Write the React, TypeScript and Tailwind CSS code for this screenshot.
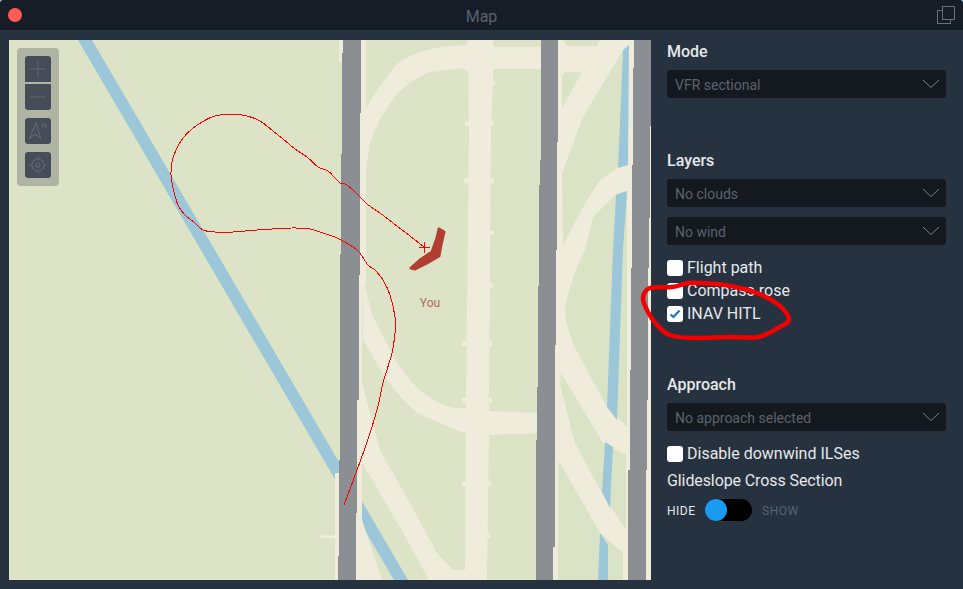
import React from "react";

type Pt = [number, number];

const smooth = (pts: Pt[]) => {
  let d = `M${pts[0][0]} ${pts[0][1]}`;
  for (let i = 0; i < pts.length - 1; i++) {
    const p0 = pts[Math.max(i - 1, 0)];
    const p1 = pts[i];
    const p2 = pts[i + 1];
    const p3 = pts[Math.min(i + 2, pts.length - 1)];
    const c1x = p1[0] + (p2[0] - p0[0]) / 6;
    const c1y = p1[1] + (p2[1] - p0[1]) / 6;
    const c2x = p2[0] - (p3[0] - p1[0]) / 6;
    const c2y = p2[1] - (p3[1] - p1[1]) / 6;
    d += ` C${c1x} ${c1y} ${c2x} ${c2y} ${p2[0]} ${p2[1]}`;
  }
  return d;
};

const trail: Pt[] = [
  [424, 247], [410, 236], [393, 223], [380, 213], [367, 204], [359, 196], [347, 185], [340, 183], [335, 178], [328, 171],
  [318, 167], [307, 157], [295, 149], [283, 139], [273, 131], [260, 121], [247, 116], [232, 114], [215, 116], [202, 122],
  [192, 129], [183, 138], [176, 150], [172, 162], [171, 175], [173, 188], [178, 205], [185, 215], [195, 223], [203, 230],
  [215, 232], [233, 232], [257, 230], [292, 228], [310, 229], [323, 233], [337, 238], [357, 250], [368, 265], [375, 270],
  [383, 280], [390, 295], [395, 317], [395, 333], [392, 353], [383, 383], [377, 410], [365, 448], [344, 505],
];

const scribble: Pt[] = [
  [702, 283], [688, 283], [672, 287], [650, 288], [643, 298], [648, 312], [657, 325], [670, 335], [692, 338], [728, 337],
  [758, 337], [778, 328], [789, 320], [782, 308], [768, 298], [748, 290], [725, 285], [702, 283],
];

const Select = ({ label }: { label: string }) => (
  <div className="flex h-[28px] w-[279px] items-center justify-between rounded-[3px] bg-[#14181f] pl-[8px] pr-[6px] text-[14px] text-[#5d636c]">
    <span className="pt-[2px]">{label}</span>
    <svg width="18" height="10" viewBox="0 0 18 10" fill="none" stroke="#7b818a" strokeWidth="1">
      <path d="M1 1 L9 8.5 L17 1" />
    </svg>
  </div>
);

const Check = ({ label, checked }: { label: string; checked?: boolean }) => (
  <div className="flex h-[23px] items-center gap-[4px] text-[16px] text-[#e6e8ea]">
    <span className="flex h-[16px] w-[16px] items-center justify-center rounded-[3px] bg-white">
      {checked && (
        <svg width="12" height="10" viewBox="0 0 12 10" fill="none" stroke="#1e78b8" strokeWidth="2.2">
          <path d="M1.5 5.5 L4.5 8 L10.5 1.5" />
        </svg>
      )}
    </span>
    <span>{label}</span>
  </div>
);

const Tool = ({ children, className = "" }: { children: React.ReactNode; className?: string }) => (
  <div className={`h-[26px] w-[26px] bg-[#464c58] ${className}`}>{children}</div>
);

const MapDrawing = () => (
  <svg viewBox="9 40 642 540" width="642" height="540" className="block">
    <rect x="9" y="40" width="642" height="540" fill="#dce3c6" />
    <polygon points="78,40 92,40 408,580 394,580" fill="#9bc7d8" />
    <g fill="#efecdc">
      <rect x="339" y="40" width="5" height="22" />
      <rect x="335" y="473" width="5" height="107" />
      <rect x="319" y="535.5" width="16" height="2.5" />
      <rect x="359" y="40" width="7" height="243" />
      <rect x="355" y="270" width="7" height="310" />
      <path d="M360 113 L366 108 Q380 84 397 64 Q420 46 467 45 L468 40 L493 40 L493 46 L497 47 L541 47 L541 69 L493 69 L489 73 L470 73 L463 68 L430 72 Q410 80 397 94 Q378 118 370 143 L364 185 L360 185 Z" />
      <polygon points="468,40 493,40 493,80 491,130 489,400 489,433 487,580 465,580 466,400 469,130" />
      <polygon points="465,121 494,121 494,126 465,126" />
      <polygon points="464,178 494,178 494,183 464,183" />
      <polygon points="488,81 495,81 495,85 488,85" />
      <polygon points="488,231 494,231 494,235 488,235" />
      <polygon points="486,283 493,283 493,288 486,288" />
      <polygon points="462,341 492,341 492,346 462,346" />
      <polygon points="462,398 492,398 492,403 462,403" />
      <polygon points="462,481 491,481 491,486 462,486" />
      <polygon points="485,533 490,533 490,538 485,538" />
      <path d="M362 250 L363 277 Q368 300 373 317 L397 363 Q410 382 423 393 Q440 405 453 408 L467 408 L490 411 L541 413 L541 433 L490 435 L463 433 L417 413 Q400 398 387 380 L363 340 Z" />
      <path d="M362 383 L380 450 L410 503 L437 553 L453 570 L470 570 L470 582 L430 582 L400 527 L362 463 Z" />
      <polygon points="355,513 362,520 382,580 355,580" />
      <rect x="553" y="40" width="96" height="540" />
      <rect x="645" y="125" width="6" height="455" />
    </g>
    <g fill="#dbe3c6">
      <polygon points="563,40 600,40 597,46 567,46" />
      <polygon points="562,76 565,72 582,72 562,108" />
      <polygon points="623,50 583,117 562,173 563,245 587,200 600,180 617,168 623,165" />
      <path d="M627 191 L617 193 L593 217 L585 250 Q572 275 565 307 Q565 330 580 357 L607 407 L627 427 Z" />
      <polygon points="561,373 603,443 626,455 626,530 600,490 575,443 560,385" />
      <polygon points="560,463 600,533 623,553 623,580 558,580 558,463" />
    </g>
    <g fill="#9bc7d8">
      <polygon points="623,50 629,45 628,165 618,168" />
      <polygon points="616,195 627,191 623,250 617,420 607,407 613,250" />
      <polygon points="605,442 613,447 610,508 602,492" />
      <polygon points="600,533 608,545 608,580 598,580" />
    </g>
    <g fill="#8b8e93" shapeRendering="crispEdges">
      <polygon points="343,40 361,40 361,113 360,113 360,275 359,275 359,400 357,400 357,513 356,513 356,580 338,580 338,556 339,556 339,460 340,460 340,254 341,254 341,154 342,154 342,53 343,53" />
      <polygon points="541,40 558,40 558,142 557,142 557,250 556,250 556,345 555,345 555,547 553,547 553,580 536,580 536,440 537,440 537,387 538,387 538,286 539,286 539,185 540,185 540,160 541,160" />
      <polygon points="634,40 651,40 651,126 650,126 650,218 649,218 649,268 648,268 648,400 647,400 647,470 646,470 646,580 628,580 628,470 630,470 630,370 631,370 631,268 632,268 632,165 633,165 633,68 634,68" />
    </g>
    <polygon points="439,229 444,232 441,245 439,256 427,263 415,269 411,268 420,260 432,252 437,238" fill="#b03f31" stroke="#b03f31" strokeWidth="3" strokeLinejoin="round" />
    <path d={smooth(trail)} fill="none" stroke="#ff0000" strokeWidth="1" shapeRendering="crispEdges" />
    <path d="M419 247.5 H430 M424.5 242 V253" stroke="#ff0000" strokeWidth="1" shapeRendering="crispEdges" />
    <text x="430" y="307" textAnchor="middle" fontSize="12" fill="#b5695d" fontFamily="Roboto, sans-serif">You</text>
  </svg>
);

export default function App() {
  return (
    <div className="h-[589px] w-[963px] bg-[#a8c6dc]">
      <div className="relative flex h-[589px] w-[963px] flex-col overflow-hidden rounded-t-[4px] bg-[#263240] font-['Roboto',sans-serif]">
        <div className="relative flex h-[30px] items-center justify-center bg-[#161d27] pt-[4px] text-[16px] text-[#59626e]">
          <span className="absolute left-[8px] top-[8px] h-[14px] w-[14px] rounded-full bg-[#ff5b57]" />
          <span>Map</span>
          <svg className="absolute left-[936px] top-[5px]" width="20" height="20" viewBox="0 0 20 20" fill="none" stroke="#6a717b" strokeWidth="1">
            <rect x="1.5" y="5.5" width="13" height="13" />
            <rect x="6.5" y="1.5" width="12" height="13" fill="#161d27" />
          </svg>
        </div>

        <div className="flex flex-1 pl-[9px] pt-[10px]">
          <div className="relative h-[540px] w-[642px]">
            <MapDrawing />
            <div className="absolute left-[8px] top-[8px] flex h-[138px] w-[42px] flex-col rounded-[4px] bg-[#b0b5a3] p-[8px]">
              <Tool className="rounded-t-[3px]">
                <svg width="26" height="26" viewBox="0 0 26 26" stroke="#5f6571" strokeWidth="1.2"><path d="M5 13 H21 M13 5 V21" /></svg>
              </Tool>
              <Tool className="mt-[2px] rounded-b-[3px]">
                <svg width="26" height="26" viewBox="0 0 26 26" stroke="#5f6571" strokeWidth="1.2"><path d="M5 13 H21" /></svg>
              </Tool>
              <Tool className="mt-[8px] rounded-[3px]">
                <svg width="26" height="26" viewBox="0 0 26 26" fill="none" stroke="#5f6571" strokeWidth="1.2">
                  <path d="M11 4.7 L4.3 20.3 L10.5 16.3 L15.7 20.3 Z" />
                  <text x="16.5" y="10" fontSize="8" fill="#5f6571" stroke="none" fontFamily="Roboto, sans-serif">N</text>
                </svg>
              </Tool>
              <Tool className="mt-[8px] rounded-[3px]">
                <svg width="26" height="26" viewBox="0 0 26 26" fill="none" stroke="#5f6571" strokeWidth="1.2">
                  <circle cx="13" cy="13" r="6" />
                  <circle cx="13" cy="13" r="2" />
                  <path d="M13 4 V7 M13 19 V22 M4 13 H7 M19 13 H22" />
                </svg>
              </Tool>
            </div>
          </div>

          <div className="flex flex-col pl-[16px] text-[#e6e8ea]">
            <div className="flex h-[24px] items-center text-[16px] font-medium">Mode</div>
            <div className="mt-[6px]"><Select label="VFR sectional" /></div>
            <div className="mt-[53px] flex h-[20px] items-center text-[16px] font-medium">Layers</div>
            <div className="mt-[8px]"><Select label="No clouds" /></div>
            <div className="mt-[10px]"><Select label="No wind" /></div>
            <div className="mt-[11px]">
              <Check label="Flight path" />
              <Check label="Compass rose" />
              <Check label="INAV HITL" checked />
            </div>
            <div className="mt-[50px] flex h-[20px] items-center text-[16px] font-medium">Approach</div>
            <div className="mt-[8px]"><Select label="No approach selected" /></div>
            <div className="mt-[11px]"><Check label="Disable downwind ILSes" /></div>
            <div className="mt-[6px] flex h-[20px] items-center text-[16px] tracking-[-0.1px]">Glideslope Cross Section</div>
            <div className="mt-[8px] flex h-[22px] items-center text-[12px] tracking-[0.5px]">
              <span className="w-[38px] pt-[2px]">HIDE</span>
              <span className="relative h-[22px] w-[47px] rounded-full bg-black">
                <span className="absolute left-0 top-0 h-[22px] w-[22px] rounded-full bg-[#1a9bf0]" />
              </span>
              <span className="ml-[10px] pt-[2px] text-[#59626e]">SHOW</span>
            </div>
          </div>
        </div>

        <svg className="pointer-events-none absolute left-0 top-0" width="963" height="589" viewBox="0 0 963 589" fill="none">
          <path d={smooth(scribble)} stroke="#f40000" strokeWidth="4.5" strokeLinejoin="round" strokeLinecap="round" />
        </svg>
      </div>
    </div>
  );
}
